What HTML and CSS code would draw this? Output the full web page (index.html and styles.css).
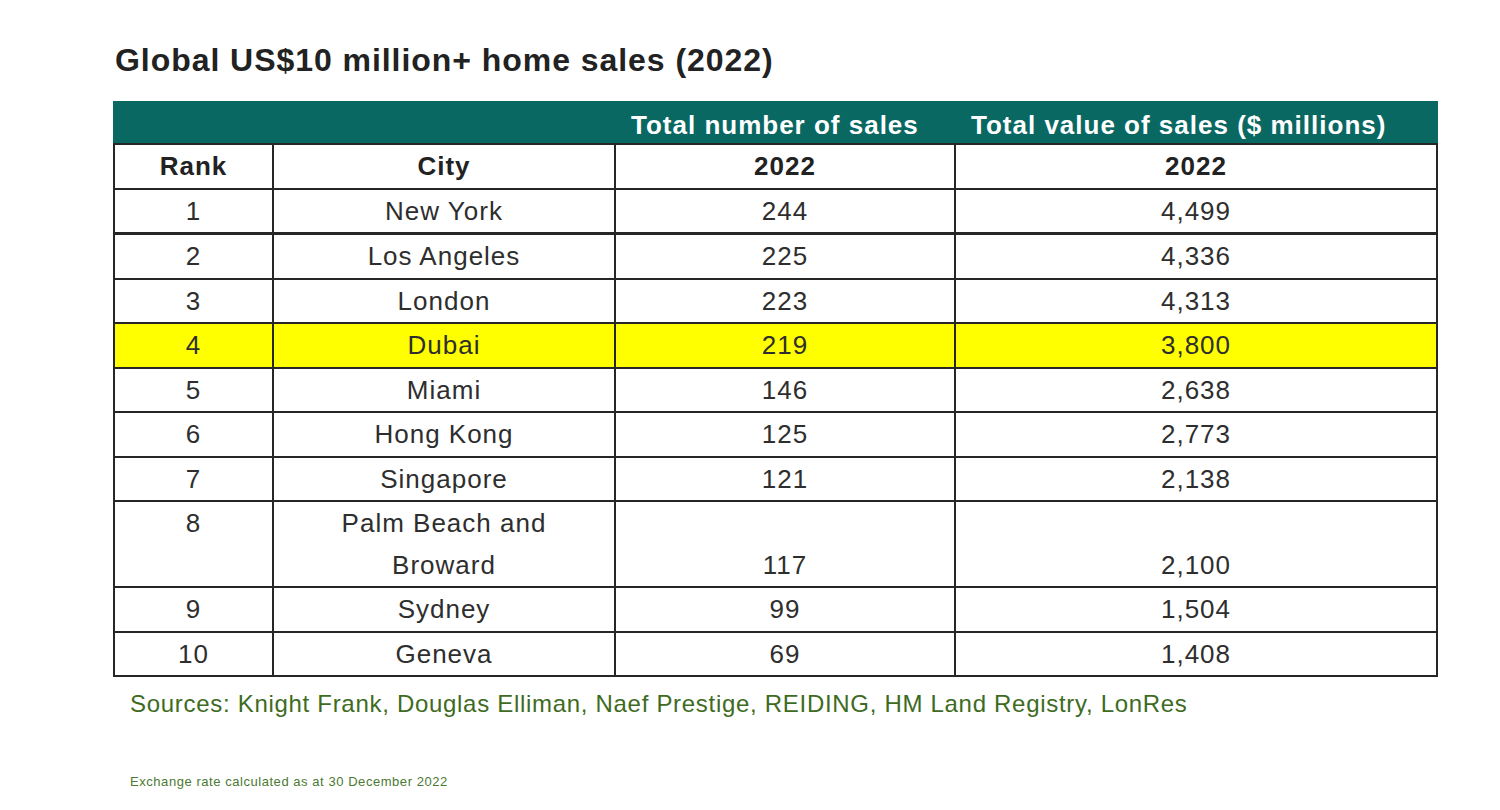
FILE: index.html
```html
<!DOCTYPE html>
<html lang="en">
<head>
<meta charset="utf-8">
<title>Global US$10 million+ home sales (2022)</title>
<link rel="stylesheet" href="styles.css">
</head>
<body>
<main class="page">
  <h1 class="title">Global US$10 million+ home sales (2022)</h1>
  <table class="sales">
    <colgroup>
      <col class="c-rank">
      <col class="c-city">
      <col class="c-num">
      <col class="c-val">
    </colgroup>
    <thead>
      <tr class="band">
        <th></th>
        <th></th>
        <th class="band-label">Total number of sales</th>
        <th class="band-label">Total value of sales ($ millions)</th>
      </tr>
      <tr class="sub">
        <th>Rank</th>
        <th>City</th>
        <th>2022</th>
        <th>2022</th>
      </tr>
    </thead>
    <tbody>
      <tr class="first"><td>1</td><td>New York</td><td>244</td><td>4,499</td></tr>
      <tr><td>2</td><td>Los Angeles</td><td>225</td><td>4,336</td></tr>
      <tr><td>3</td><td>London</td><td>223</td><td>4,313</td></tr>
      <tr class="hl"><td>4</td><td>Dubai</td><td>219</td><td>3,800</td></tr>
      <tr><td>5</td><td>Miami</td><td>146</td><td>2,638</td></tr>
      <tr><td>6</td><td>Hong Kong</td><td>125</td><td>2,773</td></tr>
      <tr><td>7</td><td>Singapore</td><td>121</td><td>2,138</td></tr>
      <tr class="tall"><td class="top">8</td><td class="wrap">Palm Beach and<br>Broward</td><td class="bottom">117</td><td class="bottom">2,100</td></tr>
      <tr><td>9</td><td>Sydney</td><td>99</td><td>1,504</td></tr>
      <tr><td>10</td><td>Geneva</td><td>69</td><td>1,408</td></tr>
    </tbody>
  </table>
  <p class="sources">Sources: Knight Frank, Douglas Elliman, Naef Prestige, REIDING, HM Land Registry, LonRes</p>
  <p class="note">Exchange rate calculated as at 30 December 2022</p>
</main>
</body>
</html>
```

FILE: styles.css
```css
html, body {
  margin: 0;
  padding: 0;
  background: #ffffff;
}

body {
  font-family: "Liberation Sans", Arial, sans-serif;
  color: #2b2b2b;
}

.page {
  padding: 40px 0 0 113px;
  width: 1324px;
}

.title {
  margin: 0 0 0 2px;
  font-size: 32px;
  line-height: 40px;
  font-weight: bold;
  letter-spacing: 0.95px;
  color: #222222;
}

.sales {
  margin-top: 21px;
  border-collapse: collapse;
  table-layout: fixed;
  width: 1323px;
  font-size: 26px;
  letter-spacing: 1px;
}

.c-rank { width: 159px; }
.c-city { width: 342px; }
.c-num  { width: 340px; }
.c-val  { width: 482px; }

.sales th,
.sales td {
  padding: 0;
  height: 42.5px;
  text-align: center;
  vertical-align: middle;
  line-height: 42px;
  border: 2px solid #262626;
  color: #2e2e2e;
}

.sales th {
  font-weight: bold;
  color: #222222;
}

.band th {
  background: #0a6863;
  border-color: #0a6863;
  border-bottom-color: #262626;
  color: #ffffff;
  height: 40px;
  vertical-align: bottom;
  line-height: 35px;
}

.band .band-label {
  text-align: left;
  padding-left: 15px;
}

.band th + th {
  border-left-color: #0a6863;
}

.first td {
  border-bottom-width: 3px;
}

.hl td {
  background: #ffff00;
}

.tall td {
  height: 83px;
}

.tall .top {
  vertical-align: top;
}

.tall .bottom {
  vertical-align: bottom;
}

.tall .wrap {
  line-height: 42px;
}

.sources {
  margin: 7px 0 0 17px;
  font-size: 24px;
  line-height: 40px;
  letter-spacing: 0.7px;
  color: #3e6b22;
}

.note {
  margin: 48px 0 0 17px;
  font-size: 13px;
  line-height: 20px;
  letter-spacing: 0.55px;
  color: #4a7a32;
}
```
